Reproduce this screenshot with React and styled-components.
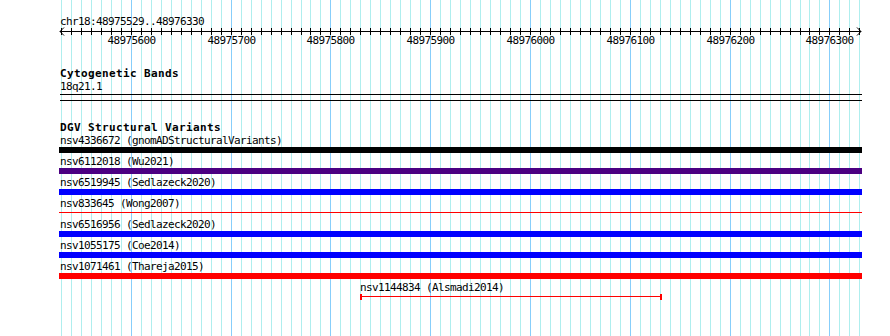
import React from 'react'
import styled, { createGlobalStyle } from 'styled-components'

// view window
const START = 48975529
const END = 48976330
const X0 = 60
const SCALE = 0.998
const CLIP_L = 59
const CLIP_R = 862

const xOf = bp => X0 + (bp - START) * SCALE
const crisp = bp => Math.round(xOf(bp)) + 0.5

const minorTicks = []
for (let bp = 48975530; bp <= END; bp += 10) minorTicks.push(bp)
const majorTicks = minorTicks.filter(bp => bp % 100 === 0)

const features = [
  { name: 'nsv4336672', src: 'gnomADStructuralVariants', color: '#000000', glyph: 'box', start: 48970000, end: 48980000 },
  { name: 'nsv6112018', src: 'Wu2021', color: '#4b0082', glyph: 'box', start: 48970000, end: 48980000 },
  { name: 'nsv6519945', src: 'Sedlazeck2020', color: '#0000ff', glyph: 'box', start: 48970000, end: 48980000 },
  { name: 'nsv833645', src: 'Wong2007', color: '#ff0000', glyph: 'line', start: 48970000, end: 48980000 },
  { name: 'nsv6516956', src: 'Sedlazeck2020', color: '#0000ff', glyph: 'box', start: 48970000, end: 48980000 },
  { name: 'nsv1055175', src: 'Coe2014', color: '#0000ff', glyph: 'box', start: 48970000, end: 48980000 },
  { name: 'nsv1071461', src: 'Thareja2015', color: '#ff0000', glyph: 'box', start: 48970000, end: 48980000 },
  { name: 'nsv1144834', src: 'Alsmadi2014', color: '#ff0000', glyph: 'span', start: 48975830, end: 48976131 },
]

const placeOf = f => {
  const l = Math.max(CLIP_L, Math.round(xOf(f.start)))
  const r = Math.min(CLIP_R, Math.round(xOf(f.end)) + 1)
  return { left: l, width: r - l }
}

const GlobalStyle = createGlobalStyle`
  html, body { margin: 0; padding: 0; background: #fff; }
  body { font-family: "DejaVu Sans Mono", "Liberation Mono", monospace; color: #000; }
`

const Page = styled.div`
  position: relative;
  width: 890px;
  height: 336px;
  overflow: hidden;
  background: #fff;
`

const Grid = styled.svg`
  position: absolute;
  left: 0;
  top: 0;
`

const Tracks = styled.div`
  position: relative;
  display: flex;
  flex-direction: column;
`

const Ruler = styled.svg`
  display: block;
  font-family: "DejaVu Sans Mono", monospace;
  font-size: 11px;
  letter-spacing: -0.62px;
`

const TrackTitle = styled.div`
  margin-top: ${p => p.$gap}px;
  padding-left: 60px;
  font: bold 11px/13px "DejaVu Sans Mono", monospace;
  letter-spacing: 0.38px;
  white-space: pre;
`

const Label = styled.div`
  height: 13px;
  font: 11px/13px "DejaVu Sans Mono", monospace;
  letter-spacing: -0.62px;
  white-space: pre;
`

const BandBox = styled.div`
  margin: 1px 0 0 60px;
  width: 802px;
  height: 5px;
  border-top: 1px solid #000;
  border-bottom: 1px solid #000;
`

const Feature = styled.div`
  display: flex;
  flex-direction: column;
  margin-bottom: 2px;
`

const Slot = styled.div`
  height: 6px;
  display: flex;
  align-items: flex-start;
`

const Bar = styled.div`
  height: 6px;
  background: ${p => p.$color};
`

const Line = styled.div`
  height: 1px;
  margin-top: 2px;
  background: ${p => p.$color};
`

const Span = styled.div`
  height: 6px;
  display: flex;
  align-items: flex-start;
`

const Cap = styled.div`
  width: 2px;
  height: 6px;
  background: ${p => p.$color};
`

const Stem = styled.div`
  flex: 1;
  height: 1px;
  margin-top: 2px;
  background: ${p => p.$color};
`

function Glyph({ f }) {
  const { left, width } = placeOf(f)
  const pos = { marginLeft: left, width }
  if (f.glyph === 'box') return <Slot><Bar $color={f.color} style={pos} /></Slot>
  if (f.glyph === 'line') return <Slot><Line $color={f.color} style={pos} /></Slot>
  return (
    <Slot>
      <Span style={pos}>
        <Cap $color={f.color} />
        <Stem $color={f.color} />
        <Cap $color={f.color} />
      </Span>
    </Slot>
  )
}

export default function App() {
  return (
    <Page>
      <GlobalStyle />
      <Grid width="890" height="336">
        {minorTicks.map(bp => (
          <line key={bp} x1={crisp(bp)} x2={crisp(bp)} y1="0" y2="336"
            stroke={bp % 100 === 0 ? '#87cefa' : '#afeeee'} strokeWidth="1" />
        ))}
      </Grid>
      <Tracks>
        <Ruler width="890" height="48">
          <text x="60" y="25">chr18:48975529..48976330</text>
          <line x1="60" x2="861" y1="31.5" y2="31.5" stroke="#000" />
          <polyline points="64,27.5 60,31.5 64,35.5" fill="none" stroke="#000" />
          <polyline points="857,27.5 861,31.5 857,35.5" fill="none" stroke="#000" />
          {minorTicks.map(bp => (
            <line key={bp} x1={crisp(bp)} x2={crisp(bp)} y1="28" y2="35" stroke="#000" />
          ))}
          {majorTicks.map(bp => (
            <text key={bp} x={crisp(bp)} y="44" textAnchor="middle">{bp}</text>
          ))}
        </Ruler>

        <TrackTitle $gap={19}>Cytogenetic Bands</TrackTitle>
        <Label style={{ paddingLeft: 60 }}>18q21.1</Label>
        <BandBox />

        <TrackTitle $gap={20}>DGV Structural Variants</TrackTitle>
        {features.map(f => (
          <Feature key={f.name}>
            <Label style={{ paddingLeft: Math.max(60, placeOf(f).left) }}>{`${f.name} (${f.src})`}</Label>
            <Glyph f={f} />
          </Feature>
        ))}
      </Tracks>
    </Page>
  )
}
